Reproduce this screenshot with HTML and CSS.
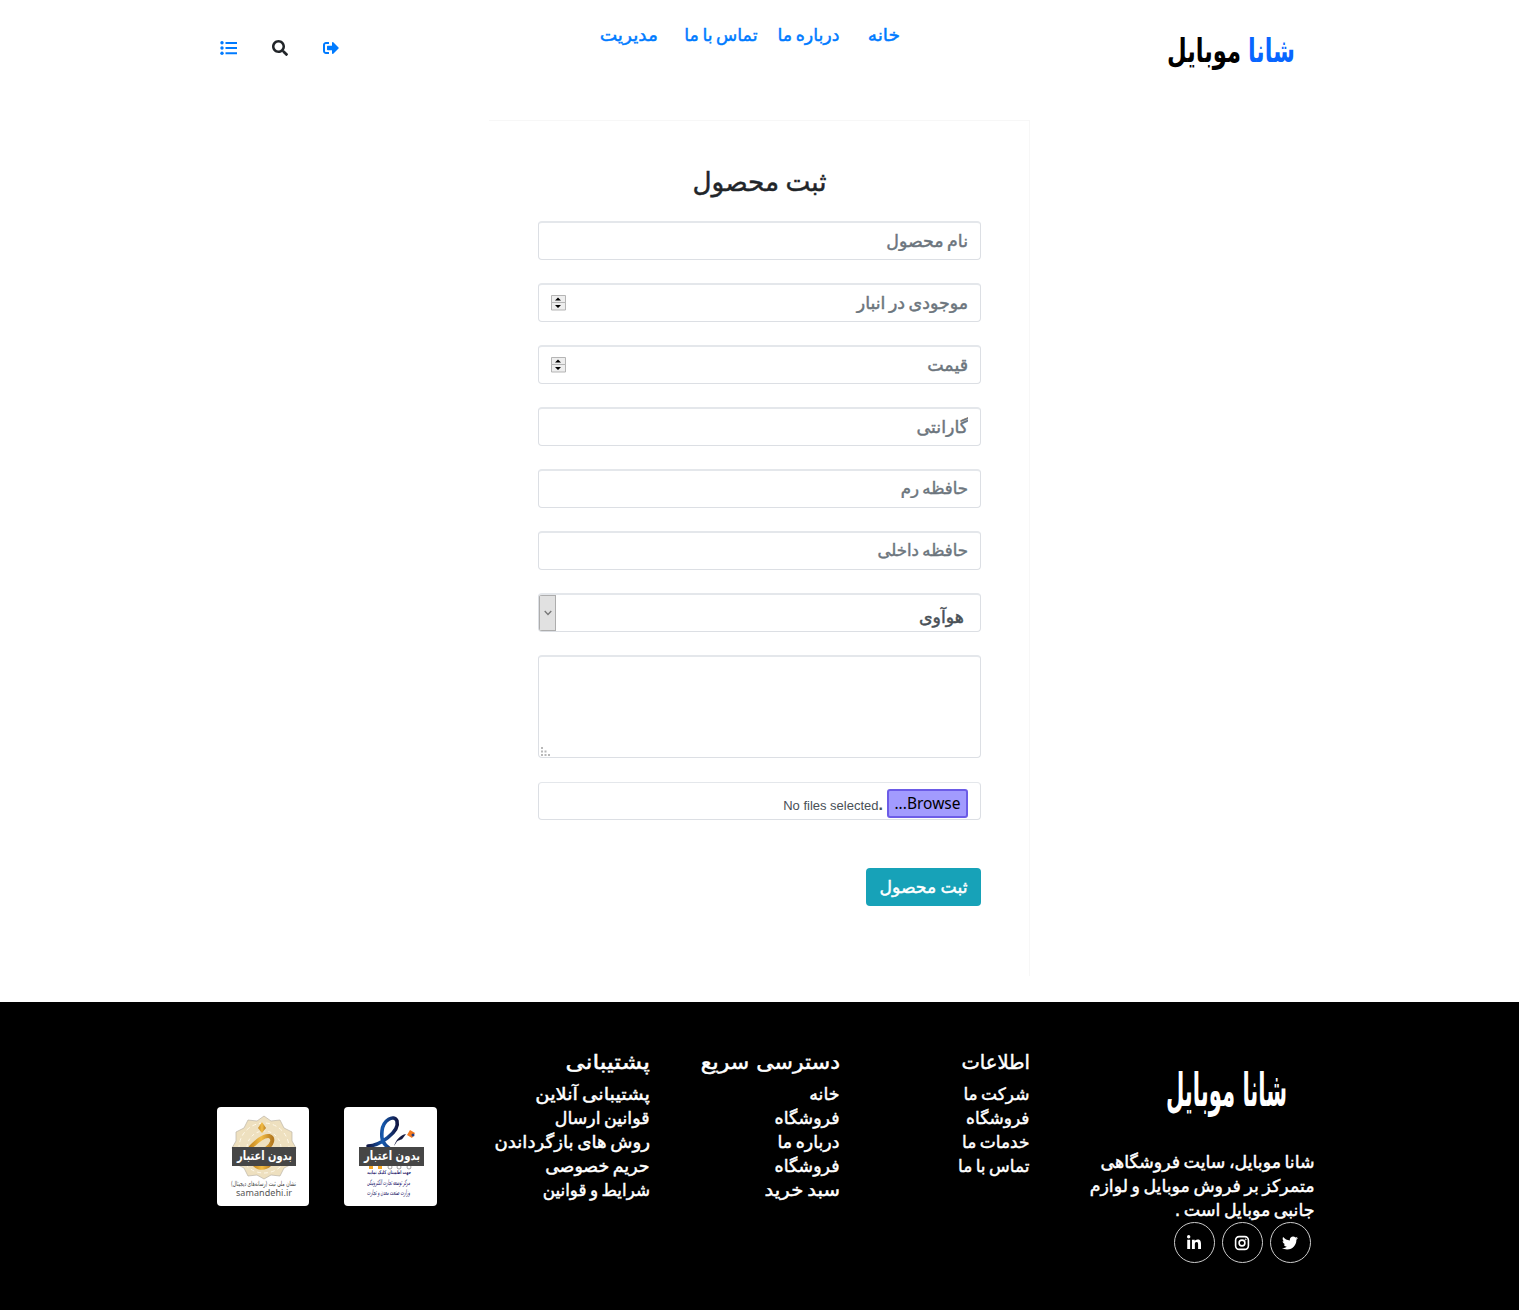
FILE: index.html
```html
<!DOCTYPE html>
<html lang="fa" dir="rtl">
<head>
<meta charset="utf-8">
<title>ثبت محصول</title>
<link rel="stylesheet" href="styles.css">
</head>
<body>
<header class="header container">
  <a class="brand" href="#"><svg width="130" height="40" viewBox="0 0 130 40"><g transform="scale(1 1.250)"><text class="brand-blue" x="129" y="23" textLength="47" lengthAdjust="spacingAndGlyphs">شانا</text><text class="brand-dark" x="75" y="23" textLength="74" lengthAdjust="spacingAndGlyphs">موبایل</text></g></svg></a>
  <nav class="nav"><a class="n1" href="#">خانه</a><a class="n2" href="#">درباره ما</a><a class="n3" href="#">تماس با ما</a><a class="n4" href="#">مدیریت</a></nav>
  <div class="tools">
    <svg width="16" height="16" viewBox="0 0 512 512" fill="#007bff"><path d="M497 273L329 441c-15 15-41 4.500-41-17v-96H152c-13.300 0-24-10.700-24-24v-96c0-13.300 10.700-24 24-24h136V88c0-21.400 25.900-32 41-17l168 168c9.300 9.400 9.300 24.600 0 34zM192 436v-40c0-6.600-5.400-12-12-12H96c-17.700 0-32-14.300-32-32V160c0-17.700 14.300-32 32-32h84c6.600 0 12-5.400 12-12V76c0-6.600-5.400-12-12-12H96c-53 0-96 43-96 96v192c0 53 43 96 96 96h84c6.600 0 12-5.400 12-12z"/></svg>
    <svg width="16" height="16" viewBox="0 0 512 512" fill="#212529"><path d="M505 442.700L405.300 343c-4.500-4.500-10.600-7-17-7H372c27.600-35.300 44-79.700 44-128C416 93.100 322.900 0 208 0S0 93.100 0 208s93.100 208 208 208c48.300 0 92.700-16.400 128-44v16.300c0 6.400 2.500 12.500 7 17l99.700 99.700c9.400 9.400 24.600 9.400 33.900 0l28.300-28.300c9.400-9.400 9.400-24.600.1-34zM208 336c-70.700 0-128-57.200-128-128 0-70.700 57.200-128 128-128 70.700 0 128 57.200 128 128 0 70.700-57.200 128-128 128z"/></svg>
    <svg width="17" height="16" viewBox="0 0 17 16" fill="#007bff"><circle cx="2" cy="2.700" r="1.700"/><circle cx="2" cy="8" r="1.700"/><circle cx="2" cy="13.300" r="1.700"/><path d="M5.500 2h11.500v2H5.500zM5.500 7h11.500v2H5.500zM5.500 12.300h11.500v2H5.500z"/></svg>
  </div>
</header>
<main class="card">
  <h1>ثبت محصول</h1>
  <form>
    <div class="field"><input type="text" placeholder="نام محصول"></div>
    <div class="field"><input type="text" placeholder="موجودی در انبار"><svg class="spin" width="15" height="16" viewBox="0 0 15 16"><path d="M.5.500h14v7H.5zM.5 7.500h14v7.500H.5z" fill="#eee" stroke="#b5b5b5"/><path d="M4 5.500h6L7 2.500zM4 10h6l-3 3z" fill="#000"/></svg></div>
    <div class="field"><input type="text" placeholder="قیمت"><svg class="spin" width="15" height="16" viewBox="0 0 15 16"><path d="M.5.500h14v7H.5zM.5 7.500h14v7.500H.5z" fill="#eee" stroke="#b5b5b5"/><path d="M4 5.500h6L7 2.500zM4 10h6l-3 3z" fill="#000"/></svg></div>
    <div class="field"><input type="text" placeholder="گارانتی"></div>
    <div class="field memory"><input type="text" placeholder="حافظه رم"></div>
    <div class="field memory"><input type="text" placeholder="حافظه داخلی"></div>
    <div class="field select"><span class="value">هوآوی</span><span class="arrow"><svg width="8" height="6" viewBox="0 0 8 6" fill="none" stroke="#777" stroke-width="1.300"><path d="M.7 1L4 4.500 7.300 1"/></svg></span></div>
    <div class="field area"><svg width="9" height="9" viewBox="0 0 9 9" fill="#b8b8b8"><path d="M0 0h2v2H0zM0 3.500h2v2H0zM0 7h2v2H0zM3.500 3.500h2v2h-2zM3.500 7h2v2h-2zM7 7h2v2H7z"/></svg></div>
    <div class="field file"><button type="button">Browse...</button><span dir="ltr">No files selected<b>.</b></span></div>
    <button class="submit" type="button">ثبت محصول</button>
  </form>
</main>
<footer class="footer">
  <div class="container cols">
    <section class="about">
      <svg width="122" height="52" viewBox="0 0 122 52"><g transform="scale(1 1.850)"><text class="logo-white" x="121" y="21.500" textLength="121" lengthAdjust="spacingAndGlyphs">شانا موبایل</text></g></svg>
      <p>شانا موبایل، سایت فروشگاهی<br>متمرکز بر فروش موبایل و لوازم<br>جانبی موبایل است .</p>
      <div class="social">
        <a href="#"><svg width="16" height="16" viewBox="0 0 512 512" fill="#fff"><path d="M459.400 151.700c.3 4.500.3 9.100.3 13.600 0 138.700-105.600 298.600-298.600 298.600-59.500 0-114.700-17.200-161.100-47.100 8.400 1 16.600 1.300 25.300 1.300 49.100 0 94.200-16.600 130.300-44.800-46.100-1-84.800-31.200-98.100-72.800 6.500 1 13 1.600 19.800 1.600 9.400 0 18.800-1.300 27.600-3.600-48.100-9.700-84.100-52-84.100-103v-1.300c14 7.800 30.200 12.700 47.400 13.300-28.300-18.800-46.800-51-46.800-87.400 0-19.500 5.200-37.400 14.300-53 51.700 63.700 129.300 105.300 216.400 109.800-1.600-7.800-2.600-15.900-2.600-24 0-57.800 46.800-104.900 104.900-104.900 30.200 0 57.500 12.700 76.700 33.100 23.700-4.500 46.500-13.300 66.600-25.300-7.800 24.400-24.400 44.800-46.100 57.800 21.100-2.300 41.600-8.100 60.400-16.200-14.300 20.800-32.200 39.300-52.600 54.300z"/></svg></a>
        <a href="#"><svg width="16" height="16" viewBox="0 0 16 16" fill="none" stroke="#fff" stroke-width="1.600"><rect x="1.600" y="1.600" width="12.800" height="12.800" rx="3.600"/><circle cx="8" cy="8" r="2.900"/><circle cx="11.700" cy="4.400" r=".5" stroke-width="1"/></svg></a>
        <a href="#"><svg width="16" height="16" viewBox="0 0 448 512" fill="#fff"><path d="M100.300 448H7.400V148.900h92.900zM53.800 108.100C24.100 108.100 0 83.500 0 53.800a53.800 53.800 0 0 1 107.600 0c0 29.700-24.100 54.300-53.800 54.300zM447.900 448h-92.700V302.400c0-34.700-.7-79.200-48.300-79.200-48.300 0-55.700 37.700-55.700 76.700V448h-92.800V148.900h89.100v40.800h1.300c12.400-23.500 42.700-48.300 87.900-48.300 94 0 111.300 61.900 111.300 142.300V448z"/></svg></a>
      </div>
    </section>
    <section class="links info"><h2>اطلاعات</h2><a href="#">شرکت ما</a><a href="#">فروشگاه</a><a href="#">خدمات ما</a><a href="#">تماس با ما</a></section>
    <section class="links quick"><h2>دسترسی سریع</h2><a href="#">خانه</a><a href="#">فروشگاه</a><a href="#">درباره ما</a><a href="#">فروشگاه</a><a href="#">سبد خرید</a></section>
    <section class="links support"><h2>پشتیبانی</h2><a href="#">پشتیبانی آنلاین</a><a href="#">قوانین ارسال</a><a href="#">روش های بازگرداندن</a><a href="#">حریم خصوصی</a><a href="#">شرایط و قوانین</a></section>
    <section class="badges">
      <svg width="93" height="99" viewBox="0 0 93 99">
        <defs><linearGradient id="blue" x1="0" x2="1"><stop offset="0" stop-color="#111744"/><stop offset=".5" stop-color="#1559ae"/><stop offset="1" stop-color="#111744"/></linearGradient></defs>
        <rect width="93" height="99" rx="4" fill="#fff"/>
        <path d="M24 39c11 0 32-14 29-25-3-7-14-1-15 10-1 9 1 13 8 18" fill="none" stroke="url(#blue)" stroke-width="3.600" stroke-linecap="round"/>
        <path d="M50 39c2-6 6-11 12-12l-3 4c-2 3-5 1-7 5" fill="#171b42"/><path d="M63 28l3-5 5 3-3 5z" fill="#f47a20"/><circle cx="69" cy="28" r="1.500" fill="#243c80"/>
        <path d="M25 59h4v3h-4zM34 59h4v3h-4z" fill="#f5a623"/><g fill="none" stroke="#777" stroke-width=".7"><circle cx="46" cy="60" r="2"/><circle cx="55" cy="60" r="2"/><circle cx="65" cy="60" r="2"/></g>
        <rect x="15" y="40" width="65" height="19" fill="#464646"/>
        <text class="stamp" x="76" y="53" textLength="56" lengthAdjust="spacingAndGlyphs">بدون اعتبار</text>
        <g class="blue-copy"><text x="67" y="67" textLength="44" lengthAdjust="spacingAndGlyphs">جهت اطمینان کلیک نمایید</text><text class="script-copy" x="66" y="78" textLength="43" lengthAdjust="spacingAndGlyphs">مرکز توسعه تجارت الکترونیکی</text><text class="script-copy" x="66" y="88" textLength="43" lengthAdjust="spacingAndGlyphs">وزارت صنعت معدن و تجارت</text></g>
      </svg>
      <svg width="92" height="99" viewBox="0 0 92 99">
        <defs><linearGradient id="gold" x1="0" x2="1"><stop offset="0" stop-color="#c48620"/><stop offset=".5" stop-color="#f3bd45"/><stop offset="1" stop-color="#b57a20"/></linearGradient></defs>
        <rect width="92" height="99" rx="4" fill="#fff"/>
        <path d="M47 9l7 5 9-1 4 8 8 4v9l4 7-4 7v9l-8 4-4 8-9-1-7 4-7-4-9 1-4-8-8-4v-9l-4-7 4-7v-9l8-4 4-8 9 1z" fill="#eee0bf" stroke="#bbb5a8" stroke-width=".7"/>
        <g fill="none" stroke="#fff9e9" stroke-width="1"><circle cx="47" cy="41" r="25" stroke-dasharray="4 3"/><circle cx="47" cy="41" r="17" stroke-dasharray="3 3"/></g>
        <path d="M41 21l4-6 4 6-4 5z" fill="url(#gold)"/><path d="M33 41c6-6 13-13 19-12 6 2 3 9-3 13" fill="none" stroke="url(#gold)" stroke-width="4"/><path d="M36 59c5 5 13 5 18 0z" fill="url(#gold)"/>
        <rect x="15" y="40" width="64" height="19" fill="#464646"/>
        <text class="stamp" x="75" y="53" textLength="55" lengthAdjust="spacingAndGlyphs">بدون اعتبار</text>
        <text class="gray-copy" x="79" y="79" textLength="65" lengthAdjust="spacingAndGlyphs">نشان ملی ثبت (رسانه‌های دیجیتال)</text>
        <text class="domain" x="19" y="89" direction="ltr" textLength="56">samandehi.ir</text>
      </svg>
    </section>
  </div>
</footer>
</body>
</html>
```
FILE: styles.css
```css
* { box-sizing: border-box; }
body { margin: 0; background: #fff; color: #212529; font: 17.4px/24px "DejaVu Sans", sans-serif; word-spacing: -2px; -webkit-text-stroke: .45px; }
a { color: #007bff; text-decoration: none; }
svg { display: block; flex: none; overflow: visible; -webkit-text-stroke: 0; word-spacing: 0; }
h1, h2, p { margin: 0; font-weight: 400; }
.container { width: 1140px; margin: 0 auto; }
.header { height: 120px; display: flex; justify-content: space-between; padding: 23px 34px 0 30px; }
.brand { padding-top: 10px; }
.brand text { font-size: 26px; font-weight: 700; }
.brand-blue { fill: #0866ff; }
.brand-dark { fill: #000; }
.nav { display: flex; width: 305px; padding-right: 5px; white-space: nowrap; }
.nav a { flex: none; transform-origin: right; }
.n1 { width: 32px; margin-inline-end: 28px; transform: scaleX(1.07); }
.n2 { width: 62px; margin-inline-end: 20px; }
.n3 { width: 72px; margin-inline-end: 28px; }
.n4 { width: 58px; transform: scaleX(1.065); }
.tools { display: flex; gap: 35px; padding-top: 17px; }
.card { width: 541px; height: 856px; margin: 0 auto; padding: 42px 48px 0 49px; border-top: 1px solid #f7f7f7; border-right: 1px solid #f7f7f7; }
.card h1 { font-size: 26.3px; line-height: 38px; text-align: center; margin-bottom: 20px; }
.field { height: 39px; margin-bottom: 23px; border: 1px solid #dcdfe4; border-top: 2px solid #e4e7eb; border-radius: 4px; padding: 0 12px 1px; display: flex; align-items: center; }
.field input { flex: 1; min-width: 0; border: 0; padding: 0; outline: 0; background: none; color: #495057; font: inherit; word-spacing: -2px; }
.field input::placeholder { color: #6c757d; opacity: 1; }
.memory input { font-size: 16.6px; }
.field.select { padding: 0 16px 0 0; color: #495057; overflow: hidden; }
.value { flex: 1; padding-top: 7px; }
.arrow { width: 17px; height: 36px; border: 1px solid #adadad; background: #e1e1e1; display: flex; align-items: center; justify-content: center; }
.field.area { height: 103px; align-items: flex-end; justify-content: flex-end; padding: 0 2px 1px; margin-bottom: 24px; }
.field.file { border-top-width: 1px; height: 38px; margin: 0 0 48px; color: #495057; font: 13px/20px "Liberation Sans", sans-serif; word-spacing: 0; -webkit-text-stroke: 0; padding: 4px 12px 0; }
.file button { width: 81px; height: 29px; border: 2px solid #6c5ce7; border-radius: 3px; background: #a29bfe; color: #000; padding: 0; margin-inline-end: 4px; font: 15.5px "Noto Sans", sans-serif; }
.file span { padding-top: 5px; }
.file b { font-size: 16px; }
.submit { display: block; width: 115px; height: 38px; border: 0; border-radius: 4px; padding: 0; background: #17a2b8; color: #fff; font: 17.2px "DejaVu Sans", sans-serif; word-spacing: -1px; white-space: nowrap; }
.footer { height: 308px; margin-top: 26px; background: #000; color: #fff; }
.footer a { color: #fff; }
.cols { display: flex; }
.about { width: 285px; padding: 64px 15px 0; }
.about > svg { margin: 0 27px 32px 0; }
.logo-white { font-size: 25px; font-weight: 700; fill: #fff; }
.about p { white-space: nowrap; }
.social { display: flex; gap: 7px; padding-right: 4px; }
.social a { width: 41px; height: 41px; border: 1px solid #ccc; border-radius: 50%; display: grid; place-items: center; }
.links { width: 190px; padding: 46px 15px 0; display: flex; flex-direction: column; white-space: nowrap; }
.links h2 { font-size: 20px; line-height: 28px; margin-bottom: 6px; word-spacing: 0; }
.links > * { transform-origin: right; }
.info { font-size: 17px; }
.info h2 { transform: scaleX(.975); }
.quick h2 { transform: scaleX(1.1); }
.quick a:last-child { transform: scaleX(1.13); }
.support h2 { transform: scaleX(1.21); }
.support a:nth-child(2) { transform: scaleX(1.12); }
.support a:nth-child(4) { transform: scaleX(1.045); }
.support a:nth-child(6) { transform: scaleX(.965); }
.badges { width: 285px; padding: 105px 38px 0 27px; display: flex; gap: 35px; }
.stamp { fill: #fff; font-size: 12.5px; font-weight: 700; }
.blue-copy { fill: #29246d; font-size: 5px; font-weight: 700; }
.script-copy { font-size: 7.5px; font-style: italic; font-weight: 400; }
.gray-copy { fill: #444; font-size: 7px; }
.domain { fill: #555; font: 9px "Noto Sans", sans-serif; }
```
